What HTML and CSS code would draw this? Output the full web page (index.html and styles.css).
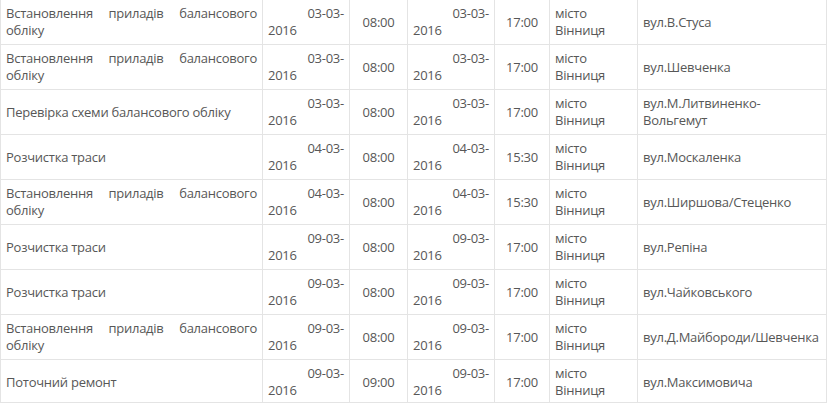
FILE: index.html
```
<!DOCTYPE html>
<html lang="uk">
<head>
<meta charset="utf-8">
<link rel="stylesheet" href="styles.css">
</head>
<body>
<table class="works">
  <colgroup>
    <col class="c-desc"><col class="c-date"><col class="c-time"><col class="c-date"><col class="c-time2"><col class="c-city"><col class="c-street">
  </colgroup>
  <tbody>
    <tr>
      <td class="desc">Встановлення приладів балансового обліку</td>
      <td class="date"><span class="d1">03-03-</span><span class="d2">2016</span></td>
      <td class="time">08:00</td>
      <td class="date"><span class="d1">03-03-</span><span class="d2">2016</span></td>
      <td class="time">17:00</td>
      <td class="city">місто Вінниця</td>
      <td class="street">вул.В.Стуса</td>
    </tr>
    <tr>
      <td class="desc">Встановлення приладів балансового обліку</td>
      <td class="date"><span class="d1">03-03-</span><span class="d2">2016</span></td>
      <td class="time">08:00</td>
      <td class="date"><span class="d1">03-03-</span><span class="d2">2016</span></td>
      <td class="time">17:00</td>
      <td class="city">місто Вінниця</td>
      <td class="street">вул.Шевченка</td>
    </tr>
    <tr>
      <td class="desc">Перевірка схеми балансового обліку</td>
      <td class="date"><span class="d1">03-03-</span><span class="d2">2016</span></td>
      <td class="time">08:00</td>
      <td class="date"><span class="d1">03-03-</span><span class="d2">2016</span></td>
      <td class="time">17:00</td>
      <td class="city">місто Вінниця</td>
      <td class="street">вул.М.Литвиненко-Вольгемут</td>
    </tr>
    <tr>
      <td class="desc">Розчистка траси</td>
      <td class="date"><span class="d1">04-03-</span><span class="d2">2016</span></td>
      <td class="time">08:00</td>
      <td class="date"><span class="d1">04-03-</span><span class="d2">2016</span></td>
      <td class="time">15:30</td>
      <td class="city">місто Вінниця</td>
      <td class="street">вул.Москаленка</td>
    </tr>
    <tr>
      <td class="desc">Встановлення приладів балансового обліку</td>
      <td class="date"><span class="d1">04-03-</span><span class="d2">2016</span></td>
      <td class="time">08:00</td>
      <td class="date"><span class="d1">04-03-</span><span class="d2">2016</span></td>
      <td class="time">15:30</td>
      <td class="city">місто Вінниця</td>
      <td class="street">вул.Ширшова/Стеценко</td>
    </tr>
    <tr>
      <td class="desc">Розчистка траси</td>
      <td class="date"><span class="d1">09-03-</span><span class="d2">2016</span></td>
      <td class="time">08:00</td>
      <td class="date"><span class="d1">09-03-</span><span class="d2">2016</span></td>
      <td class="time">17:00</td>
      <td class="city">місто Вінниця</td>
      <td class="street">вул.Репіна</td>
    </tr>
    <tr>
      <td class="desc">Розчистка траси</td>
      <td class="date"><span class="d1">09-03-</span><span class="d2">2016</span></td>
      <td class="time">08:00</td>
      <td class="date"><span class="d1">09-03-</span><span class="d2">2016</span></td>
      <td class="time">17:00</td>
      <td class="city">місто Вінниця</td>
      <td class="street">вул.Чайковського</td>
    </tr>
    <tr>
      <td class="desc">Встановлення приладів балансового обліку</td>
      <td class="date"><span class="d1">09-03-</span><span class="d2">2016</span></td>
      <td class="time">08:00</td>
      <td class="date"><span class="d1">09-03-</span><span class="d2">2016</span></td>
      <td class="time">17:00</td>
      <td class="city">місто Вінниця</td>
      <td class="street">вул.Д.Майбороди/Шевченка</td>
    </tr>
    <tr class="last">
      <td class="desc">Поточний ремонт</td>
      <td class="date"><span class="d1">09-03-</span><span class="d2">2016</span></td>
      <td class="time">09:00</td>
      <td class="date"><span class="d1">09-03-</span><span class="d2">2016</span></td>
      <td class="time">17:00</td>
      <td class="city">місто Вінниця</td>
      <td class="street">вул.Максимовича</td>
    </tr>
  </tbody>
</table>
</body>
</html>
```
FILE: styles.css
```
html, body {
  margin: 0;
  padding: 0;
  background: #ffffff;
}

body {
  font-family: "Open Sans", "Noto Sans", sans-serif;
  font-size: 13px;
  line-height: 17px;
  letter-spacing: -0.25px;
  color: #575757;
}

.works {
  width: 827px;
  table-layout: fixed;
  border-collapse: separate;
  border-spacing: 0;
  border-left: 1px solid #e4e4e4;
}

.c-desc { width: 262px; }
.c-date { width: 87px; }
.c-time { width: 58px; }
.c-time2 { width: 55px; }
.c-city { width: 88px; }
.c-street { width: 189px; }

.works td {
  padding: 5px 5px;
  height: 34px;
  border-right: 1px solid #e4e4e4;
  border-bottom: 1px solid #e4e4e4;
  vertical-align: middle;
}

.works tr.last td {
  padding-bottom: 3px;
  height: 34px;
}

.desc {
  text-align: justify;
  text-align-last: left;
}

.date .d1 {
  display: block;
  text-align: right;
}

.date .d2 {
  display: block;
  text-align: left;
}

.time {
  text-align: center;
}

.street {
  padding-left: 4px;
}
```
